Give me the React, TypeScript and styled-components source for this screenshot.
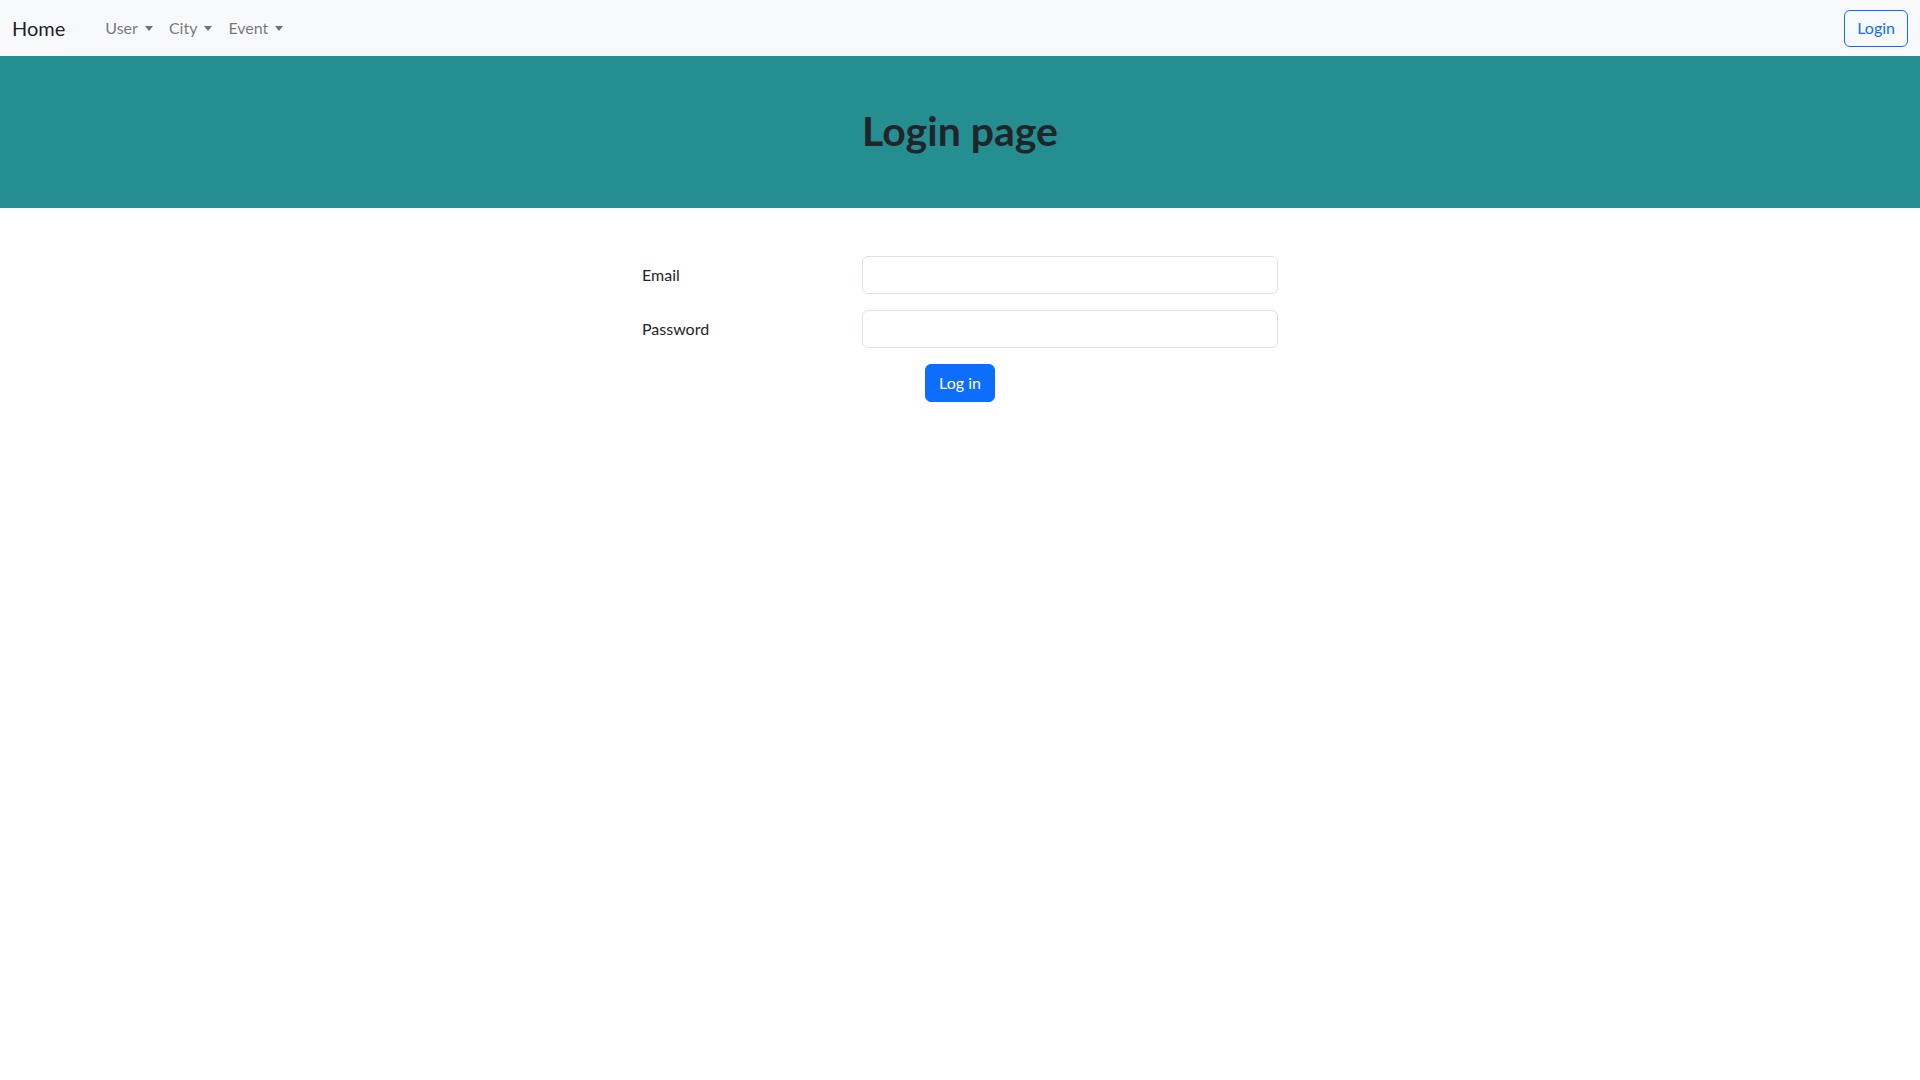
import React from 'react';
import styled, { createGlobalStyle } from 'styled-components';

const GlobalStyle = createGlobalStyle`
  * {
    box-sizing: border-box;
  }

  body {
    margin: 0;
    background: #fff;
    color: #212529;
    font-family: Lato, "Noto Sans", sans-serif;
    font-size: 16px;
    line-height: 1.5;
  }
`;

const Navbar = styled.nav`
  display: flex;
  align-items: center;
  justify-content: space-between;
  height: 56px;
  padding: 0 12px;
  background: #f8f9fa;
`;

const NavLeft = styled.div`
  display: flex;
  align-items: center;
`;

const Brand = styled.a`
  font-size: 20px;
  line-height: 30px;
  color: rgba(0, 0, 0, 0.9);
  text-decoration: none;
  margin-right: 32px;
`;

const NavLinks = styled.ul`
  display: flex;
  list-style: none;
  margin: 0;
  padding: 0;
`;

const NavLink = styled.li`
  display: flex;
  align-items: center;
  padding: 8px;
  color: rgba(0, 0, 0, 0.55);
  cursor: pointer;

  &::after {
    content: '';
    display: inline-block;
    margin-left: 7px;
    border-top: 5px solid;
    border-right: 4.5px solid transparent;
    border-left: 4.5px solid transparent;
  }
`;

const OutlineButton = styled.button`
  height: 37px;
  padding: 0 12px;
  font: inherit;
  color: #0d6efd;
  background: transparent;
  border: 1px solid #0d6efd;
  border-radius: 6px;
  cursor: pointer;
`;

const Hero = styled.header`
  background: #258e91;
  padding: 51px 0 53px;
  text-align: center;
`;

const Title = styled.h1`
  margin: 0;
  font-size: 41px;
  font-weight: 700;
  line-height: 48px;
  color: #212529;
`;

const Form = styled.form`
  width: 660px;
  margin: 48px auto 0;
  display: flex;
  flex-direction: column;
  gap: 16px;
`;

const Row = styled.div`
  display: grid;
  grid-template-columns: 220px 1fr;
  align-items: center;
`;

const Label = styled.label`
  padding: 0 12px;
  font-size: 16px;
`;

const Input = styled.input`
  margin: 0 12px;
  height: 38px;
  padding: 6px 12px;
  font: inherit;
  border: 1px solid #dee2e6;
  border-radius: 6px;
  outline: none;
`;

const Actions = styled.div`
  display: flex;
  justify-content: center;
`;

const PrimaryButton = styled.button`
  height: 38px;
  padding: 0 13px;
  font: inherit;
  color: #fff;
  background: #0d6efd;
  border: 1px solid #0d6efd;
  border-radius: 6px;
  cursor: pointer;
`;

const App: React.FC = () => {
  return (
    <>
      <GlobalStyle />
      <Navbar>
        <NavLeft>
          <Brand href="#">Home</Brand>
          <NavLinks>
            <NavLink>User</NavLink>
            <NavLink>City</NavLink>
            <NavLink>Event</NavLink>
          </NavLinks>
        </NavLeft>
        <OutlineButton type="button">Login</OutlineButton>
      </Navbar>
      <Hero>
        <Title>Login page</Title>
      </Hero>
      <Form onSubmit={(e) => e.preventDefault()}>
        <Row>
          <Label htmlFor="email">Email</Label>
          <Input id="email" type="email" />
        </Row>
        <Row>
          <Label htmlFor="password">Password</Label>
          <Input id="password" type="password" />
        </Row>
        <Actions>
          <PrimaryButton type="submit">Log in</PrimaryButton>
        </Actions>
      </Form>
    </>
  );
};

export default App;
